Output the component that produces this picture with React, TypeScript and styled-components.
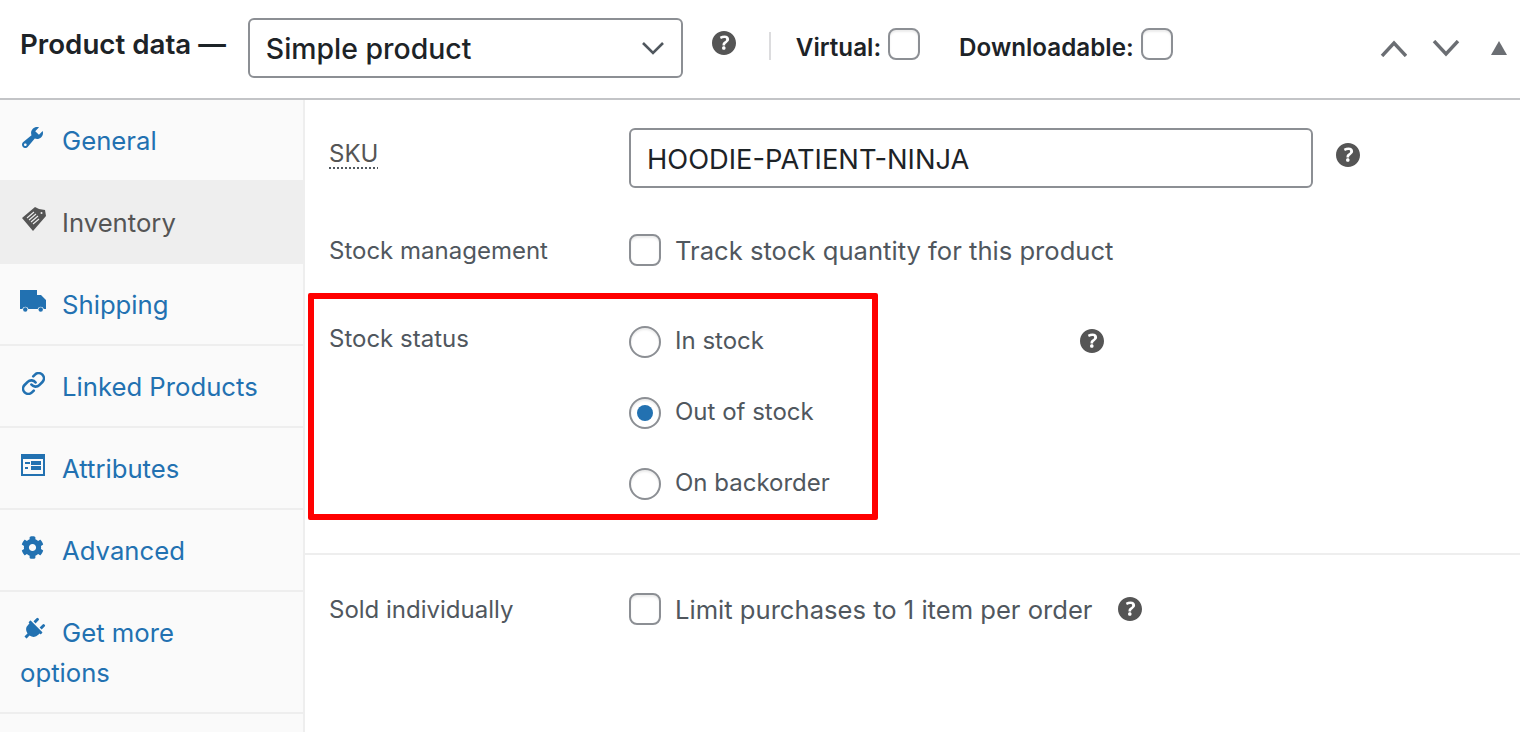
import React from 'react'
import styled, { createGlobalStyle } from 'styled-components'
import { FaCog, FaPlug } from 'react-icons/fa'

const Global = createGlobalStyle`
  html, body {
    margin: 0;
    background: #fff;
    overflow: hidden;
  }
  body {
    font-family: Inter, "Liberation Sans", sans-serif;
    font-size: 25px;
    color: #50575e;
  }
  * {
    box-sizing: border-box;
  }
`

const Page = styled.div`
  position: relative;
  width: 1520px;
  height: 732px;
  overflow: hidden;
`

const Header = styled.header`
  display: flex;
  align-items: center;
  height: 100px;
  padding: 0 0 2px 20px;
  border-bottom: 2px solid #c3c4c7;
  color: #1d2327;
`

const Title = styled.h2`
  margin: -8px 22px 0 0;
  font-size: 27.7px;
  font-weight: 600;
  white-space: nowrap;
`

const SelectBox = styled.div`
  display: flex;
  align-items: center;
  justify-content: space-between;
  width: 435px;
  height: 60px;
  padding: 0 16px;
  border: 2px solid #8c8f94;
  border-radius: 6px;
  font-size: 28.4px;
  font-weight: 500;
`

const HeaderHelp = styled.span`
  display: flex;
  margin: -10px 33px 0 29px;
`

const Separator = styled.span`
  width: 2px;
  height: 28px;
  margin: -4px 25px 0 0;
  background: #dcdcde;
`

const HeaderOption = styled.label`
  display: flex;
  align-items: center;
  gap: 7px;
  margin: -2px 39px 0 0;
  font-size: 24.2px;
  font-weight: 600;

  input {
    margin-bottom: 6px;
  }
`

const SortControls = styled.div`
  display: flex;
  align-items: center;
  gap: 25px;
  margin-left: auto;
  padding-right: 13px;
`

const SortButton = styled.svg`
  display: block;
  fill: none;
  stroke: #6b6e73;
  stroke-width: 3.4;
`

const Collapse = styled.svg`
  display: block;
  margin-left: 6px;
  fill: #6b6e73;
`

const Body = styled.div`
  display: flex;
  height: 632px;
`

const Sidebar = styled.nav`
  flex: none;
  width: 305px;
  background: #fafafa;
  border-right: 2px solid #eee;
`

const Tab = styled.a<{ $active?: boolean }>`
  display: block;
  padding: 21px 40px 19px 20px;
  line-height: 40px;
  font-size: 25.7px;
  color: ${p => (p.$active ? '#555' : '#2271b1')};
  background: ${p => (p.$active ? '#eee' : 'transparent')};
  border-bottom: 2px solid #eee;
`

const TabIcon = styled.span`
  display: inline-block;
  width: 42px;
  height: 26px;
  overflow: hidden;
  vertical-align: 0;
`

const TabIconBox = styled.span<{ $left: number }>`
  display: flex;
  align-items: center;
  height: 100%;
  padding-left: ${p => p.$left}px;

  svg {
    display: block;
    fill: currentColor;
  }
`

const PlugIcon = styled(FaPlug)`
  transform: rotate(45deg);
`

const Content = styled.main`
  flex: 1;
  min-width: 0;
`

const StockSection = styled.section`
  padding: 28px 0 53px 24px;
  border-bottom: 2px solid #eee;
`

const Row = styled.div<{ $top?: number }>`
  display: flex;
  align-items: center;
  margin-top: ${p => p.$top ?? 0}px;
`

const TopRow = styled(Row)`
  align-items: flex-start;
`

const FieldLabel = styled.label`
  flex: none;
  width: 300px;
  margin-top: 2px;
  line-height: 28px;
  font-size: 24px;
`

const SkuLabel = styled.abbr`
  color: #555;
  text-decoration: underline dotted #50575e 2px;
  text-underline-offset: 5px;
`

const SkuFieldLabel = styled(FieldLabel)`
  margin: -8px 0 0;
`

const StatusLabel = styled(FieldLabel)`
  margin-top: 0;
  line-height: 26px;
`

const TextInput = styled.input`
  width: 684px;
  height: 60px;
  padding: 2px 16px 0;
  border: 2px solid #8c8f94;
  border-radius: 6px;
  font-family: inherit;
  font-size: 27.3px;
  color: #1d2327;
`

const Check = styled.input`
  appearance: none;
  flex: none;
  width: 32px;
  height: 32px;
  margin: 0;
  background: #fff;
  border: 2px solid #8c8f94;
  border-radius: 8px;
  box-shadow: inset 0 2px 2px rgba(0, 0, 0, 0.08);
`

const Radio = styled(Check)`
  position: relative;
  border-radius: 50%;

  &:checked::before {
    content: '';
    position: absolute;
    inset: 6px;
    border-radius: 50%;
    background: #2271b1;
  }
`

const CheckText = styled.span`
  margin: 2px 0 0 14px;
  line-height: 28px;
  font-size: 25.6px;
`

const RadioList = styled.ul`
  flex: none;
  display: flex;
  flex-direction: column;
  gap: 39px;
  width: 451px;
  margin: 0;
  padding: 0;
  list-style: none;
`

const RadioItem = styled.li`
  display: flex;
  align-items: center;
  height: 32px;
  font-size: 24px;

  span {
    margin: -3px 0 0 14px;
  }
`

const Help = styled.span<{ $left?: number; $top?: number }>`
  display: flex;
  margin-left: ${p => p.$left ?? 0}px;
  margin-top: ${p => p.$top ?? 0}px;
`

const SoldSection = styled.section`
  padding: 38px 0 0 24px;
`

const Highlight = styled.div`
  position: absolute;
  left: 308px;
  top: 293px;
  width: 570px;
  height: 227px;
  border: 6px solid #ff0000;
  border-radius: 2px;
  pointer-events: none;
`

const HelpIcon = () => (
  <svg width="24" height="24" viewBox="3 3 14 14" fill="#555">
    <path d="M17 10c0-3.87-3.14-7-7-7-3.87 0-7 3.13-7 7s3.13 7 7 7c3.86 0 7-3.13 7-7zm-6.3 1.48H9.14v-.43c0-.38.08-.7.24-.98s.46-.57.88-.89c.41-.29.68-.53.81-.71.14-.18.2-.39.2-.62 0-.25-.09-.44-.28-.58-.19-.13-.45-.19-.79-.19-.58 0-1.25.19-2 .57l-.64-1.28c.87-.49 1.8-.74 2.77-.74.81 0 1.45.2 1.92.58.48.39.71.91.71 1.55 0 .43-.09.8-.29 1.11-.19.32-.57.67-1.13 1.06-.38.28-.62.49-.72.63-.1.14-.15.32-.15.54v.38zm-1.56 2.25c-.19-.18-.28-.43-.28-.75 0-.33.09-.58.27-.76.18-.18.43-.26.76-.26.32 0 .57.09.75.26.18.18.27.43.27.76 0 .32-.09.57-.27.75-.18.19-.43.28-.75.28-.33 0-.58-.09-.75-.28z" />
  </svg>
)

const WrenchIcon = () => (
  <svg width="21" height="21" viewBox="2 2 16 16">
    <path d="M16.68 9.77c-1.34 1.34-3.3 1.67-4.95.99l-5.41 6.52c-.99.99-2.59.99-3.58 0s-.99-2.59 0-3.58l6.52-5.42c-.68-1.65-.35-3.61.99-4.95 1.28-1.28 3.12-1.62 4.72-1.06l-2.89 2.89 2.82 2.82 2.86-2.87c.53 1.58.18 3.39-1.08 4.66zM3.81 16.21c.4.39 1.04.39 1.43 0 .4-.4.4-1.04 0-1.43-.39-.4-1.03-.4-1.43 0-.39.39-.39 1.03 0 1.43z" />
  </svg>
)

const InventoryIcon = () => (
  <svg width="24" height="24" viewBox="0 0 24 24">
    <path d="M13 0l4 2 6 1 1 6-13 15L0 11z" />
    <path
      d="M5 11l7-6M7 13l7-6M9 15l7-6M11 17l6-5"
      fill="none"
      stroke="#eee"
      strokeWidth="1.1"
    />
    <circle cx="19.5" cy="6" r="1" fill="#eee" />
  </svg>
)

const TruckIcon = () => (
  <svg width="26" height="22" viewBox="0 0 26 22">
    <path d="M0 0h17v5h4l5 5v9h-2.2a3.2 3.2 0 0 0-6.1 0H8.4a3.2 3.2 0 0 0-6.1 0H0z" />
    <circle cx="5.3" cy="19.5" r="2.2" />
    <circle cx="20.7" cy="19.5" r="2.2" />
  </svg>
)

const LinkIcon = () => (
  <svg width="23" height="23" viewBox="1 1 22 22">
    <g fill="none" stroke="currentColor" strokeWidth="2.5" strokeLinecap="round">
      <path d="M10 13a5 5 0 0 0 7.54.54l3-3a5 5 0 0 0-7.07-7.07l-1.72 1.71" />
      <path d="M14 11a5 5 0 0 0-7.54-.54l-3 3a5 5 0 0 0 7.07 7.07l1.71-1.71" />
    </g>
  </svg>
)

const AttributesIcon = () => (
  <svg width="24" height="22" viewBox="0 0 24 22">
    <path
      fillRule="evenodd"
      d="M0 0h24v22H0zM2 5v15h20V5zM4 8h5v2H4zM4 13h3v2H4zM10 7h10v4H10zM10 12h10v4H10z"
    />
  </svg>
)

const tabs = [
  { label: 'General', icon: <WrenchIcon />, left: 2 },
  { label: 'Inventory', icon: <InventoryIcon />, left: 2, active: true },
  { label: 'Shipping', icon: <TruckIcon />, left: 0 },
  { label: 'Linked Products', icon: <LinkIcon />, left: 2 },
  { label: 'Attributes', icon: <AttributesIcon />, left: 1 },
  { label: 'Advanced', icon: <FaCog size={23} />, left: 1 },
  { label: 'Get more options', icon: <PlugIcon size={23} />, left: 2 },
]

const stockOptions = [
  { label: 'In stock' },
  { label: 'Out of stock', checked: true },
  { label: 'On backorder' },
]

const App = () => (
  <Page>
    <Global />
    <Header>
      <Title>Product data —</Title>
      <SelectBox>
        Simple product
        <svg width="24" height="14" viewBox="0 0 24 14" fill="none" stroke="#50575e" strokeWidth="2.6">
          <path d="M2 2l10 10L22 2" />
        </svg>
      </SelectBox>
      <HeaderHelp>
        <HelpIcon />
      </HeaderHelp>
      <Separator />
      <HeaderOption>
        Virtual: <Check type="checkbox" readOnly />
      </HeaderOption>
      <HeaderOption>
        Downloadable: <Check type="checkbox" readOnly />
      </HeaderOption>
      <SortControls>
        <SortButton width="28" height="17" viewBox="0 0 28 17">
          <path d="M3 16L15 3l12 13" />
        </SortButton>
        <SortButton width="28" height="17" viewBox="0 0 28 17">
          <path d="M2 1l12 13L26 1" />
        </SortButton>
        <Collapse width="16" height="14" viewBox="0 0 16 14">
          <path d="M8 0l8 14H0z" />
        </Collapse>
      </SortControls>
    </Header>
    <Body>
      <Sidebar>
        {tabs.map(t => (
          <Tab key={t.label} $active={t.active}>
            <TabIcon>
              <TabIconBox $left={t.left}>{t.icon}</TabIconBox>
            </TabIcon>
            {t.label}
          </Tab>
        ))}
      </Sidebar>
      <Content>
        <StockSection>
          <Row>
            <SkuFieldLabel>
              <SkuLabel>SKU</SkuLabel>
            </SkuFieldLabel>
            <TextInput defaultValue="HOODIE-PATIENT-NINJA" />
            <Help $left={23} $top={-6}>
              <HelpIcon />
            </Help>
          </Row>
          <Row $top={46}>
            <FieldLabel>Stock management</FieldLabel>
            <Check type="checkbox" readOnly />
            <CheckText>Track stock quantity for this product</CheckText>
          </Row>
          <TopRow $top={60}>
            <StatusLabel>Stock status</StatusLabel>
            <RadioList>
              {stockOptions.map(o => (
                <RadioItem key={o.label}>
                  <Radio type="radio" name="stock" defaultChecked={o.checked} />
                  <span>{o.label}</span>
                </RadioItem>
              ))}
            </RadioList>
            <Help $top={3}>
              <HelpIcon />
            </Help>
          </TopRow>
        </StockSection>
        <SoldSection>
          <Row>
            <FieldLabel>Sold individually</FieldLabel>
            <Check type="checkbox" readOnly />
            <CheckText>Limit purchases to 1 item per order</CheckText>
            <Help $left={25}>
              <HelpIcon />
            </Help>
          </Row>
        </SoldSection>
      </Content>
    </Body>
    <Highlight />
  </Page>
)

export default App
